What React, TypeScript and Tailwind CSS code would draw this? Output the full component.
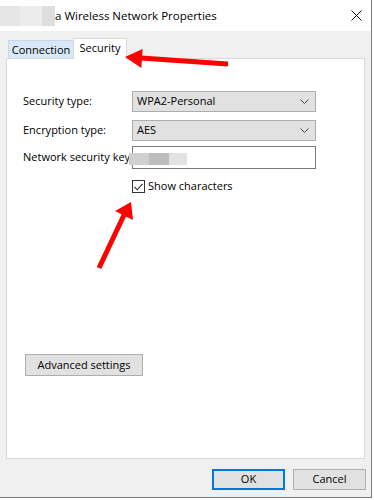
export default function App() {
  return (
    <div className="relative w-[374px] h-[500px] bg-white text-[11px] text-black" style={{ fontFamily: '"Open Sans", "Liberation Sans", sans-serif' }}>
      <div className="w-[372px] h-[498px] flex flex-col border-r border-b border-[#7a7a7a]">
        {/* title bar */}
        <div className="h-[31px] flex items-center bg-white shrink-0">
          <div className="w-[55px] h-[20px] flex">
            <div className="w-[20px] bg-[#e6e6e6]" />
            <div className="w-[22px] bg-[#ececec]" />
            <div className="w-[13px] bg-[#dedede]" />
          </div>
          <span className="text-[11.5px] leading-none">a Wireless Network Properties</span>
          <div className="ml-auto mr-[9px] flex items-center">
            <svg width="11" height="11" viewBox="0 0 11 11">
              <path d="M0.5 0.5 L10.5 10.5 M10.5 0.5 L0.5 10.5" stroke="#111" strokeWidth="1" />
            </svg>
          </div>
        </div>

        {/* body */}
        <div className="flex-1 bg-[#f0f0f0] flex flex-col">
          <div className="pt-[7px] pl-[6px]">
            <div className="flex items-end h-[20px] pl-[2px]">
              <div className="w-[65px] h-[18px] bg-[#d9e8f6] border border-r-0 border-b-0 border-[#c3d8ec] flex items-center justify-center leading-none">
                Connection
              </div>
              <div className="relative w-[54px] h-[21px] -mb-px bg-white border border-b-0 border-[#d9d9d9] flex items-center justify-center leading-none pb-[3px]">
                Security
              </div>
            </div>
            <div className="w-[359px] h-[401px] border border-[#d9d9d9] bg-white pl-[16px] pt-[32px]">
              <div className="flex items-center h-[21px]">
                <div className="w-[109px]">Security type:</div>
                <div className="w-[184px] h-[21px] bg-[#e1e1e1] border border-[#adadad] flex items-center pl-[4px] pr-[6px]">
                  <span>WPA2-Personal</span>
                  <svg className="ml-auto" width="9" height="5" viewBox="0 0 9 5">
                    <path d="M0.5 0.5 L4.5 4.5 L8.5 0.5" stroke="#444" strokeWidth="1" fill="none" />
                  </svg>
                </div>
              </div>
              <div className="flex items-center h-[21px] mt-[8px]">
                <div className="w-[109px]">Encryption type:</div>
                <div className="w-[184px] h-[21px] bg-[#e1e1e1] border border-[#adadad] flex items-center pl-[4px] pr-[6px]">
                  <span>AES</span>
                  <svg className="ml-auto" width="9" height="5" viewBox="0 0 9 5">
                    <path d="M0.5 0.5 L4.5 4.5 L8.5 0.5" stroke="#444" strokeWidth="1" fill="none" />
                  </svg>
                </div>
              </div>
              <div className="flex items-center h-[23px] mt-[5px]">
                <div className="w-[109px] whitespace-nowrap">Network security key</div>
                <div className="w-[184px] h-[23px] bg-white border border-[#7a7a7a] flex items-center">
                  <div className="flex h-[12px] -ml-[4px] mt-[3px]">
                    <div className="w-[20px] bg-[#d0d0d0]" />
                    <div className="w-[20px] bg-[#bdbdbd]" />
                    <div className="w-[18px] bg-[#e2e2e2]" />
                  </div>
                </div>
              </div>
              <div className="flex items-center h-[13px] mt-[11px] pl-[109px]">
                <div className="w-[13px] h-[13px] border border-[#333] bg-white flex items-center justify-center">
                  <svg width="9" height="8" viewBox="0 0 9 8">
                    <path d="M0.5 4 L3.3 6.8 L8.5 0.8" stroke="#333" strokeWidth="1.1" fill="none" />
                  </svg>
                </div>
                <span className="ml-[3px]">Show characters</span>
              </div>
              <button className="mt-[161px] ml-[2px] w-[118px] h-[22px] bg-[#e1e1e1] border border-[#adadad] flex items-center justify-center">
                Advanced settings
              </button>
            </div>
          </div>
          <div className="flex justify-end gap-[8px] pt-[10px] pr-[5px]">
            <button className="w-[73px] h-[21px] bg-[#e1e1e1] border-2 border-[#0078d7] flex items-center justify-center">
              OK
            </button>
            <button className="w-[73px] h-[21px] bg-[#e1e1e1] border border-[#adadad] flex items-center justify-center">
              Cancel
            </button>
          </div>
        </div>
      </div>

      {/* annotation arrows */}
      <svg className="absolute inset-0 pointer-events-none" width="374" height="500" viewBox="0 0 374 500">
        <line x1="228" y1="64" x2="141" y2="58" stroke="#ff0000" strokeWidth="5" />
        <polygon points="125,57 142.6,49 141.4,68" fill="#ff0000" />
        <line x1="99" y1="268" x2="124" y2="215" stroke="#ff0000" strokeWidth="5" />
        <polygon points="131,202 115,211 133,220" fill="#ff0000" />
      </svg>
    </div>
  );
}
